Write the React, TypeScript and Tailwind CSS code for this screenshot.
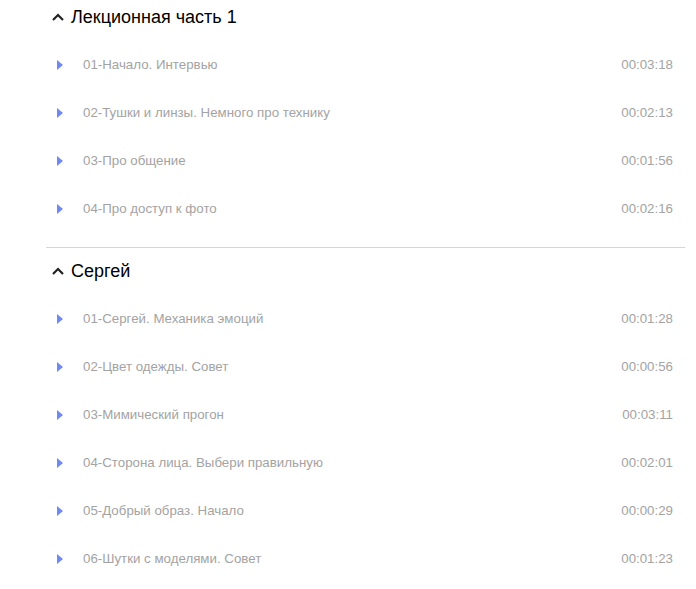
const sections = [
  {
    title: 'Лекционная часть 1',
    items: [
      { name: '01-Начало. Интервью', time: '00:03:18' },
      { name: '02-Тушки и линзы. Немного про технику', time: '00:02:13' },
      { name: '03-Про общение', time: '00:01:56' },
      { name: '04-Про доступ к фото', time: '00:02:16' },
    ],
  },
  {
    title: 'Сергей',
    items: [
      { name: '01-Сергей. Механика эмоций', time: '00:01:28' },
      { name: '02-Цвет одежды. Совет', time: '00:00:56' },
      { name: '03-Мимический прогон', time: '00:03:11' },
      { name: '04-Сторона лица. Выбери правильную', time: '00:02:01' },
      { name: '05-Добрый образ. Начало', time: '00:00:29' },
      { name: '06-Шутки с моделями. Совет', time: '00:01:23' },
    ],
  },
];

function Chevron() {
  return (
    <svg width="12" height="8" viewBox="0 0 12 8" className="shrink-0">
      <path d="M1 7 L6 2 L11 7" fill="none" stroke="#222" strokeWidth="2.2" />
    </svg>
  );
}

function Play() {
  return (
    <svg width="6" height="10" viewBox="0 0 6 10" className="shrink-0">
      <path d="M0 0 L6 5 L0 10 Z" fill="#7088f0" />
    </svg>
  );
}

export default function App() {
  return (
    <div
      className="w-[696px] h-[589px] bg-white overflow-hidden"
      style={{ fontFamily: '"Liberation Sans", Arial, sans-serif' }}
    >
      <div className="ml-[46px] w-[639px]">
        {sections.map((section, i) => (
          <div
            key={section.title}
            className={i === 0 ? 'pb-[14px] border-b border-[#d6d6d6]' : 'pt-[6px]'}
          >
            <div className="h-[34px] mb-[7px] flex items-center pl-[6px] gap-[7px]">
              <Chevron />
              <span className="text-[18px] text-black">{section.title}</span>
            </div>
            {section.items.map((item) => (
              <div key={item.name} className="h-[48px] flex items-center pl-[11px] pr-[12px]">
                <Play />
                <span className="ml-[20px] text-[13.3px] text-[#a3a3a3] flex-1">{item.name}</span>
                <span className="text-[13.3px] text-[#a3a3a3]">{item.time}</span>
              </div>
            ))}
          </div>
        ))}
      </div>
    </div>
  );
}
